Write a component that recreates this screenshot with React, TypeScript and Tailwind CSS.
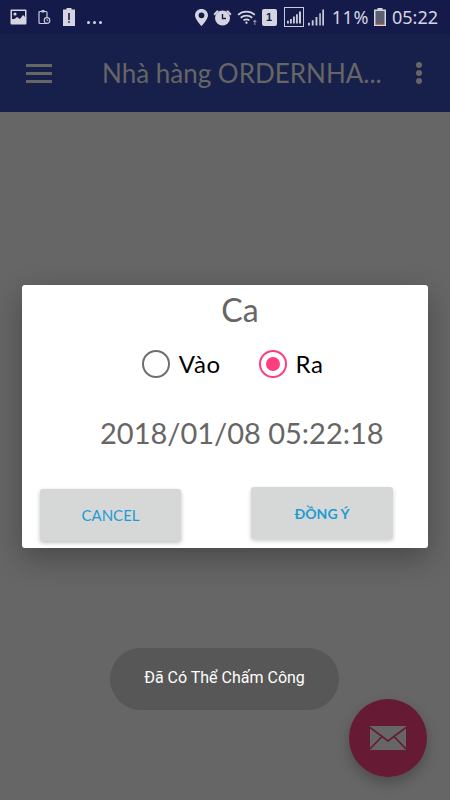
const HAND = 'font-["Lato","Noto_Sans",cursive]';

function StatusLeft() {
  return (
    <div className="flex items-center">
      {/* gallery notification */}
      <svg width="18" height="17" viewBox="0 0 18 17" className="ml-[10px]">
        <rect x="0.5" y="0.5" width="16" height="15" rx="1" fill="#d4d5e0" />
        <rect x="2" y="2" width="13" height="8" fill="#141a4a" />
        <circle cx="5" cy="5" r="1.6" fill="#d4d5e0" />
        <path d="M2 12 L7 8 L10 10 L13 6 L15 8 V14 H2 Z" fill="#d4d5e0" />
      </svg>
      {/* clipboard with clock */}
      <svg width="13" height="16" viewBox="0 0 13 16" className="ml-[10px]" fill="none" stroke="#c9cad8" strokeWidth="1.2">
        <rect x="1" y="2.5" width="8" height="12" rx="1" />
        <rect x="3.5" y="1" width="3" height="2.5" fill="#c9cad8" stroke="none" />
        <circle cx="9" cy="11.5" r="2.8" fill="#141a4a" />
        <path d="M9 10v1.6h1.3" strokeWidth="0.8" />
      </svg>
      {/* battery alert */}
      <svg width="12" height="18" viewBox="0 0 12 18" className="ml-[12px]">
        <path d="M3.5 0h5v1.5H12V18H0V1.5h3.5z" fill="#d4d5e0" />
        <rect x="5.2" y="5" width="1.6" height="7" fill="#141a4a" />
        <rect x="5.2" y="13.2" width="1.6" height="1.6" fill="#141a4a" />
      </svg>
      <div className="ml-[12px] mt-[10px] flex gap-[3px]">
        <span className="h-[3px] w-[3px] rounded-full bg-[#d4d5e0]" />
        <span className="h-[3px] w-[3px] rounded-full bg-[#d4d5e0]" />
        <span className="h-[3px] w-[3px] rounded-full bg-[#d4d5e0]" />
      </div>
    </div>
  );
}

function StatusRight() {
  return (
    <div className="flex items-center">
      {/* location */}
      <svg width="13" height="17" viewBox="0 0 13 17">
        <path fillRule="evenodd" d="M6.5 0C3 0 0 2.7 0 6.2 0 10.5 6.5 17 6.5 17S13 10.5 13 6.2C13 2.7 10 0 6.5 0zm0 3.4a2.9 2.9 0 1 1 0 5.8 2.9 2.9 0 0 1 0-5.8z" fill="#d4d5e0" />
      </svg>
      {/* alarm */}
      <svg width="19" height="17" viewBox="0 0 19 17" className="ml-[5px]">
        <circle cx="9.5" cy="9" r="7.5" fill="#d4d5e0" />
        <path d="M0.5 5 L4 1.2 L6 2 L1.8 6.5 Z M18.5 5 L15 1.2 L13 2 L17.2 6.5 Z" fill="#d4d5e0" />
        <path d="M9.5 5v4.5h3.5" stroke="#141a4a" strokeWidth="1.4" fill="none" />
      </svg>
      {/* wifi */}
      <svg width="21" height="16" viewBox="0 0 20 15" fill="none" stroke="#d4d5e0" strokeWidth="1.6" className="ml-[5px]">
        <path d="M1 5.5a12 12 0 0 1 16 0" />
        <path d="M3.5 8.2a8.5 8.5 0 0 1 11 0" />
        <path d="M6.2 10.8a4.5 4.5 0 0 1 5.6 0" />
        <circle cx="9" cy="13" r="1.1" fill="#d4d5e0" stroke="none" />
        <path d="M17 15v-4M15.6 12.2 17 10.6l1.4 1.6" strokeWidth="1" stroke="#8b8da6" />
      </svg>
      {/* sim 1 */}
      <div className="ml-[4px] flex h-[17px] w-[15px] items-center justify-center rounded-[2px] bg-[#d4d5e0] font-['Liberation_Sans',sans-serif] text-[11px] leading-none font-bold text-[#141a4a]">
        1
      </div>
      {/* signal in box */}
      <div className="ml-[7px] flex h-[20px] w-[20px] items-end justify-center border-[1.5px] border-[#c9cad8] pb-[2px]">
        <svg width="14" height="13" viewBox="0 0 15 13">
          <path d="M0 13h2v-3H0zM3.2 13h2V8h-2zM6.4 13h2V5.5h-2zM9.6 13h2V3h-2zM12.8 13H15V0h-2.2z" fill="#c9cad8" />
        </svg>
      </div>
      {/* signal */}
      <svg width="16" height="17" viewBox="0 0 17 17" className="ml-[4px]">
        <path d="M0 17h2v-3H0zM4 17h2v-5.5H4zM8 17h2V8H8zM12 17h1.6V4H12zM15.2 17H17V0h-1.8z" fill="#c9cad8" />
      </svg>
      <span className="ml-[8px] font-['Noto_Sans',sans-serif] text-[18px] leading-none tracking-[0.6px] text-[#d4d5e0]">11%</span>
      {/* battery */}
      <svg width="12" height="18" viewBox="0 0 12 18" className="ml-[5px]">
        <path d="M3.5 0h5v1.5H12V18H0V1.5h3.5z" fill="#d4d5e0" />
        <rect x="1.5" y="3" width="9" height="13.5" fill="#5d6070" />
        <rect x="1.5" y="15.6" width="9" height="1" fill="#c4552e" />
      </svg>
      <span className="ml-[6px] mr-[12px] font-['Noto_Sans',sans-serif] text-[18px] leading-none text-[#d4d5e0]">05:22</span>
    </div>
  );
}

function Radio({ label, checked }: { label: string; checked?: boolean }) {
  return (
    <div className="flex items-center gap-[9px]">
      {checked ? (
        <div className="flex h-[28px] w-[28px] items-center justify-center rounded-full border-[2.5px] border-[#ff3d7f]">
          <div className="h-[14px] w-[14px] rounded-full bg-[#ff3d7f]" />
        </div>
      ) : (
        <div className="h-[28px] w-[28px] rounded-full border-[2.5px] border-[#6e6e6e]" />
      )}
      <span className={`${HAND} text-[24px] leading-none tracking-[0.5px] text-black`}>{label}</span>
    </div>
  );
}

export default function App() {
  return (
    <div className="relative flex h-[800px] w-[450px] flex-col overflow-hidden bg-[#666666]">
      <div className="flex h-[34px] shrink-0 items-center justify-between bg-[#141a4a]">
        <StatusLeft />
        <StatusRight />
      </div>
      <header className="flex h-[78px] shrink-0 items-center bg-[#17204a]">
        <div className="ml-[26px] flex w-[26px] flex-col gap-[5px]">
          <span className="h-[3px] bg-[#666666]" />
          <span className="h-[3px] bg-[#666666]" />
          <span className="h-[3px] bg-[#666666]" />
        </div>
        <h1 className={`${HAND} ml-[50px] flex-1 text-[26px] leading-none whitespace-nowrap text-[#666666]`}>
          Nhà hàng ORDERNHA...
        </h1>
        <div className="mr-[28px] flex flex-col gap-[2px]">
          <span className="h-[6px] w-[6px] rounded-full bg-[#666666]" />
          <span className="h-[6px] w-[6px] rounded-full bg-[#666666]" />
          <span className="h-[6px] w-[6px] rounded-full bg-[#666666]" />
        </div>
      </header>

      <section className="mx-[22px] mt-[173px] flex h-[263px] w-[406px] flex-col rounded-[3px] bg-white pr-[35px] pl-[18px] shadow-[0_10px_30px_rgba(0,0,0,0.3)]">
        <h2 className={`${HAND} mt-[7px] pl-[47px] text-center text-[32px] leading-[36px] text-[#666666]`}>Ca</h2>
        <div className="mt-[22px] flex justify-center gap-[38px] pl-[32px]">
          <Radio label="Vào" />
          <Radio label="Ra" checked />
        </div>
        <p className={`${HAND} mt-[37px] pl-[60px] text-[29px] leading-[36px] whitespace-nowrap text-[#666666]`}>
          2018/01/08 05:22:18
        </p>
        <div className="mt-[36px] flex items-start justify-between">
          <button className={`${HAND} mt-[2px] h-[52px] w-[141px] rounded-[3px] bg-[#d6d7d7] text-[15px] text-[#1f9bd1] shadow-[0_2px_4px_rgba(0,0,0,0.25)]`}>
            CANCEL
          </button>
          <button className={`${HAND} h-[52px] w-[142px] rounded-[3px] bg-[#d6d7d7] text-[14px] font-bold text-[#1f9bd1] shadow-[0_2px_4px_rgba(0,0,0,0.2)]`}>
            ĐỒNG Ý
          </button>
        </div>
      </section>

      {/* toast */}
      <div className="absolute top-[648px] left-[110px] flex h-[62px] w-[229px] items-center justify-center rounded-full bg-[#575757] pb-[3px] font-['Roboto',sans-serif] text-[16px] text-white">
        Đã Có Thể Chấm Công
      </div>
      {/* fab */}
      <button className="absolute top-[699px] left-[349px] flex h-[78px] w-[78px] items-center justify-center rounded-full bg-[#661a33] shadow-[0_6px_14px_rgba(0,0,0,0.25)]">
        <svg width="36" height="24" viewBox="0 0 36 24">
          <rect width="36" height="24" fill="#666666" />
          <path d="M0 1.5 18 15 36 1.5M0 23 12 10.5M36 23 24 10.5" fill="none" stroke="#661a33" strokeWidth="1.6" />
        </svg>
      </button>
    </div>
  );
}
